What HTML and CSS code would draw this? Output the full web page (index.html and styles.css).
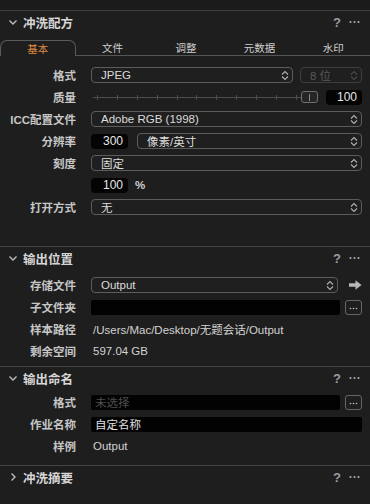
FILE: index.html
```html
<!DOCTYPE html>
<html lang="zh">
<head>
<meta charset="utf-8">
<link rel="stylesheet" href="styles.css">
</head>
<body>
<div class="panel">
  <div class="topbar"></div>

  <section class="sec recipe">
    <header class="sec-head">
      <svg class="chev" width="10" height="10" viewBox="0 0 10 10"><polyline points="1.5,3.5 5,7 8.5,3.5" fill="none" stroke="#bdbdbd" stroke-width="1.4"/></svg>
      <span class="sec-title">冲洗配方</span>
      <span class="help">?</span>
      <svg class="more" width="11" height="4" viewBox="0 0 11 4"><circle cx="1.5" cy="2" r="1.1" fill="#aaa"/><circle cx="5.5" cy="2" r="1.1" fill="#aaa"/><circle cx="9.5" cy="2" r="1.1" fill="#aaa"/></svg>
    </header>
    <nav class="tabs">
      <span class="tab active">基本</span>
      <span class="tab">文件</span>
      <span class="tab">调整</span>
      <span class="tab">元数据</span>
      <span class="tab">水印</span>
    </nav>
    <div class="rows rows-recipe">
      <div class="row">
        <span class="lbl">格式</span>
        <div class="ctl">
          <div class="select grow"><span>JPEG</span><svg class="updown" width="8" height="11" viewBox="0 0 8 11"><polyline points="1,4.5 4,1.5 7,4.5" fill="none" stroke="#b0b0b0" stroke-width="1.1"/><polyline points="1,6.5 4,9.5 7,6.5" fill="none" stroke="#b0b0b0" stroke-width="1.1"/></svg></div>
          <div class="select disabled bits"><span>8 位</span><svg class="updown" width="8" height="11" viewBox="0 0 8 11"><polyline points="1,4.5 4,1.5 7,4.5" fill="none" stroke="#4a4a4a" stroke-width="1.1"/><polyline points="1,6.5 4,9.5 7,6.5" fill="none" stroke="#4a4a4a" stroke-width="1.1"/></svg></div>
        </div>
      </div>
      <div class="row">
        <span class="lbl">质量</span>
        <div class="ctl">
          <div class="slider">
            <div class="track"><i></i><i></i><i></i><i></i><i></i><i></i><i></i><i></i><i></i><i></i><i></i></div>
            <div class="thumb"><b></b></div>
          </div>
          <div class="num q">100</div>
        </div>
      </div>
      <div class="row">
        <span class="lbl">ICC配置文件</span>
        <div class="ctl">
          <div class="select grow"><span>Adobe RGB (1998)</span><svg class="updown" width="8" height="11" viewBox="0 0 8 11"><polyline points="1,4.5 4,1.5 7,4.5" fill="none" stroke="#b0b0b0" stroke-width="1.1"/><polyline points="1,6.5 4,9.5 7,6.5" fill="none" stroke="#b0b0b0" stroke-width="1.1"/></svg></div>
        </div>
      </div>
      <div class="row">
        <span class="lbl">分辨率</span>
        <div class="ctl">
          <div class="num small">300</div>
          <div class="select grow res"><span>像素/英寸</span><svg class="updown" width="8" height="11" viewBox="0 0 8 11"><polyline points="1,4.5 4,1.5 7,4.5" fill="none" stroke="#b0b0b0" stroke-width="1.1"/><polyline points="1,6.5 4,9.5 7,6.5" fill="none" stroke="#b0b0b0" stroke-width="1.1"/></svg></div>
        </div>
      </div>
      <div class="row">
        <span class="lbl">刻度</span>
        <div class="ctl">
          <div class="select grow"><span>固定</span><svg class="updown" width="8" height="11" viewBox="0 0 8 11"><polyline points="1,4.5 4,1.5 7,4.5" fill="none" stroke="#b0b0b0" stroke-width="1.1"/><polyline points="1,6.5 4,9.5 7,6.5" fill="none" stroke="#b0b0b0" stroke-width="1.1"/></svg></div>
        </div>
      </div>
      <div class="row">
        <span class="lbl"></span>
        <div class="ctl">
          <div class="num small">100</div>
          <span class="pct">%</span>
        </div>
      </div>
      <div class="row">
        <span class="lbl">打开方式</span>
        <div class="ctl">
          <div class="select grow"><span>无</span><svg class="updown" width="8" height="11" viewBox="0 0 8 11"><polyline points="1,4.5 4,1.5 7,4.5" fill="none" stroke="#b0b0b0" stroke-width="1.1"/><polyline points="1,6.5 4,9.5 7,6.5" fill="none" stroke="#b0b0b0" stroke-width="1.1"/></svg></div>
        </div>
      </div>
    </div>
  </section>

  <section class="sec location">
    <header class="sec-head">
      <svg class="chev" width="10" height="10" viewBox="0 0 10 10"><polyline points="1.5,3.5 5,7 8.5,3.5" fill="none" stroke="#bdbdbd" stroke-width="1.4"/></svg>
      <span class="sec-title">输出位置</span>
      <span class="help">?</span>
      <svg class="more" width="11" height="4" viewBox="0 0 11 4"><circle cx="1.5" cy="2" r="1.1" fill="#aaa"/><circle cx="5.5" cy="2" r="1.1" fill="#aaa"/><circle cx="9.5" cy="2" r="1.1" fill="#aaa"/></svg>
    </header>
    <div class="rows rows-location">
      <div class="row">
        <span class="lbl">存储文件</span>
        <div class="ctl">
          <div class="select grow"><span>Output</span><svg class="updown" width="8" height="11" viewBox="0 0 8 11"><polyline points="1,4.5 4,1.5 7,4.5" fill="none" stroke="#b0b0b0" stroke-width="1.1"/><polyline points="1,6.5 4,9.5 7,6.5" fill="none" stroke="#b0b0b0" stroke-width="1.1"/></svg></div>
          <svg class="arrow" width="13" height="10" viewBox="0 0 13 10"><path d="M0 3.2 H6.5 V0.3 L12.5 5 L6.5 9.7 V6.8 H0 Z" fill="#b8b8b8"/></svg>
        </div>
      </div>
      <div class="row">
        <span class="lbl">子文件夹</span>
        <div class="ctl">
          <div class="field grow"></div>
          <div class="dots-btn"><svg width="9" height="3" viewBox="0 0 9 3"><circle cx="1.5" cy="1.5" r="0.8" fill="#c4c4c4"/><circle cx="4.5" cy="1.5" r="0.8" fill="#c4c4c4"/><circle cx="7.5" cy="1.5" r="0.8" fill="#c4c4c4"/></svg></div>
        </div>
      </div>
      <div class="row">
        <span class="lbl">样本路径</span>
        <div class="ctl"><span class="val">/Users/Mac/Desktop/无题会话/Output</span></div>
      </div>
      <div class="row">
        <span class="lbl">剩余空间</span>
        <div class="ctl"><span class="val">597.04 GB</span></div>
      </div>
    </div>
  </section>

  <section class="sec naming">
    <header class="sec-head">
      <svg class="chev" width="10" height="10" viewBox="0 0 10 10"><polyline points="1.5,3.5 5,7 8.5,3.5" fill="none" stroke="#bdbdbd" stroke-width="1.4"/></svg>
      <span class="sec-title">输出命名</span>
      <span class="help">?</span>
      <svg class="more" width="11" height="4" viewBox="0 0 11 4"><circle cx="1.5" cy="2" r="1.1" fill="#aaa"/><circle cx="5.5" cy="2" r="1.1" fill="#aaa"/><circle cx="9.5" cy="2" r="1.1" fill="#aaa"/></svg>
    </header>
    <div class="rows rows-naming">
      <div class="row">
        <span class="lbl">格式</span>
        <div class="ctl">
          <div class="field grow"><span class="ph">未选择</span></div>
          <div class="dots-btn"><svg width="9" height="3" viewBox="0 0 9 3"><circle cx="1.5" cy="1.5" r="0.8" fill="#c4c4c4"/><circle cx="4.5" cy="1.5" r="0.8" fill="#c4c4c4"/><circle cx="7.5" cy="1.5" r="0.8" fill="#c4c4c4"/></svg></div>
        </div>
      </div>
      <div class="row">
        <span class="lbl">作业名称</span>
        <div class="ctl">
          <div class="field grow"><span>自定名称</span></div>
        </div>
      </div>
      <div class="row">
        <span class="lbl">样例</span>
        <div class="ctl"><span class="val">Output</span></div>
      </div>
    </div>
  </section>

  <section class="sec summary">
    <header class="sec-head">
      <svg class="chev" width="10" height="10" viewBox="0 0 10 10"><polyline points="3.5,1.5 7,5 3.5,8.5" fill="none" stroke="#bdbdbd" stroke-width="1.4"/></svg>
      <span class="sec-title">冲洗摘要</span>
      <span class="help">?</span>
      <svg class="more" width="11" height="4" viewBox="0 0 11 4"><circle cx="1.5" cy="2" r="1.1" fill="#aaa"/><circle cx="5.5" cy="2" r="1.1" fill="#aaa"/><circle cx="9.5" cy="2" r="1.1" fill="#aaa"/></svg>
    </header>
  </section>
</div>
</body>
</html>
```

FILE: styles.css
```css
* { box-sizing: border-box; }
html, body {
  margin: 0;
  padding: 0;
  background: #1e1e1e;
}
body {
  width: 370px;
  height: 504px;
  overflow: hidden;
  font-family: "Liberation Sans", "Noto Sans CJK SC", sans-serif;
  color: #d4d4d4;
}
.panel {
  width: 370px;
}
.topbar {
  height: 11px;
  background: #1b1b1b;
  border-bottom: 1px solid #3e3e3e;
}
.sec + .sec {
  border-top: 1px solid #444;
}
.sec-head {
  height: 22px;
  display: flex;
  align-items: center;
  padding: 0 10px 0 8px;
}
.chev {
  flex: none;
  margin-right: 5px;
}
.sec-title {
  font-size: 12.5px;
  font-weight: 700;
  color: #d6d6d6;
  flex: 1;
}
.help {
  font-size: 13px;
  font-weight: 700;
  color: #9c9c9c;
  margin-right: 8px;
}
.more {
  flex: none;
}
.tabs {
  display: flex;
  margin-top: 7px;
  height: 16px;
}
.tab {
  flex: 1;
  display: flex;
  align-items: center;
  justify-content: center;
  font-size: 10.5px;
  color: #cfcfcf;
  border-bottom: 1px solid #555;
}
.tab.active {
  color: #de8a42;
  border: 1px solid #5a5a5a;
  border-bottom: none;
  border-radius: 7px 7px 0 0;
}
.rows-recipe { margin-top: 8px; padding-bottom: 28px; }
.rows-location { margin-top: 5px; padding-bottom: 4px; }
.rows-naming { margin-top: 2px; padding-bottom: 8px; }
.row {
  height: 22px;
  display: flex;
  align-items: center;
}
.lbl {
  width: 76px;
  flex: none;
  text-align: right;
  font-size: 11.5px;
  font-weight: 700;
  color: #c6c6c6;
}
.ctl {
  flex: 1;
  display: flex;
  align-items: center;
  margin-left: 15px;
  margin-right: 8px;
  height: 16px;
}
.grow { flex: 1; min-width: 0; }
.select {
  height: 16px;
  border: 1px solid #5c5c5c;
  border-radius: 4px;
  background: #1f1f1f;
  display: flex;
  align-items: center;
  justify-content: space-between;
  padding: 0 3px 0 9px;
  font-size: 11.5px;
  color: #dcdcdc;
}
.select.disabled {
  border-color: #3e3e3e;
  color: #5a5a5a;
}
.bits {
  width: 62px;
  flex: none;
  margin-left: 7px;
}
.res { margin-left: 9px; }
.num {
  height: 15px;
  background: #040404;
  border-radius: 4px;
  font-size: 12px;
  color: #e6e6e6;
  display: flex;
  align-items: center;
  justify-content: flex-end;
  padding-right: 5px;
}
.num.small { width: 37px; flex: none; }
.num.q { width: 36px; flex: none; margin-left: 8px; }
.pct {
  margin-left: 7px;
  font-size: 11.5px;
  font-weight: 700;
  color: #cfcfcf;
}
.slider {
  flex: 1;
  display: flex;
  align-items: center;
  padding-left: 2px;
}
.track {
  flex: 1;
  height: 7px;
  display: flex;
  align-items: center;
  justify-content: space-between;
  padding: 0 4px;
  background: linear-gradient(#505050, #505050) center / 100% 1px no-repeat;
}
.track i {
  display: block;
  width: 1px;
  height: 5px;
  background: #4c4c4c;
}
.thumb {
  width: 17px;
  height: 12px;
  flex: none;
  border: 1px solid #707070;
  border-radius: 3px;
  background: #262626;
  display: flex;
  justify-content: center;
  align-items: center;
}
.thumb b {
  display: block;
  width: 1px;
  height: 7px;
  background: #8a8a8a;
}
.arrow {
  flex: none;
  margin-left: 11px;
}
.field {
  height: 15px;
  background: #020202;
  border-radius: 2px;
  display: flex;
  align-items: center;
  padding-left: 4px;
  font-size: 11.5px;
  color: #e0e0e0;
}
.ph { color: #4e4e4e; }
.dots-btn {
  width: 17px;
  height: 15px;
  flex: none;
  margin-left: 5px;
  border: 1px solid #666;
  border-radius: 3px;
  display: flex;
  justify-content: center;
  align-items: center;
  padding-top: 2px;
}
.dots-btn svg { display: block; }
.val {
  font-size: 11.5px;
  color: #d2d2d2;
  margin-left: 2px;
  white-space: nowrap;
}
```
